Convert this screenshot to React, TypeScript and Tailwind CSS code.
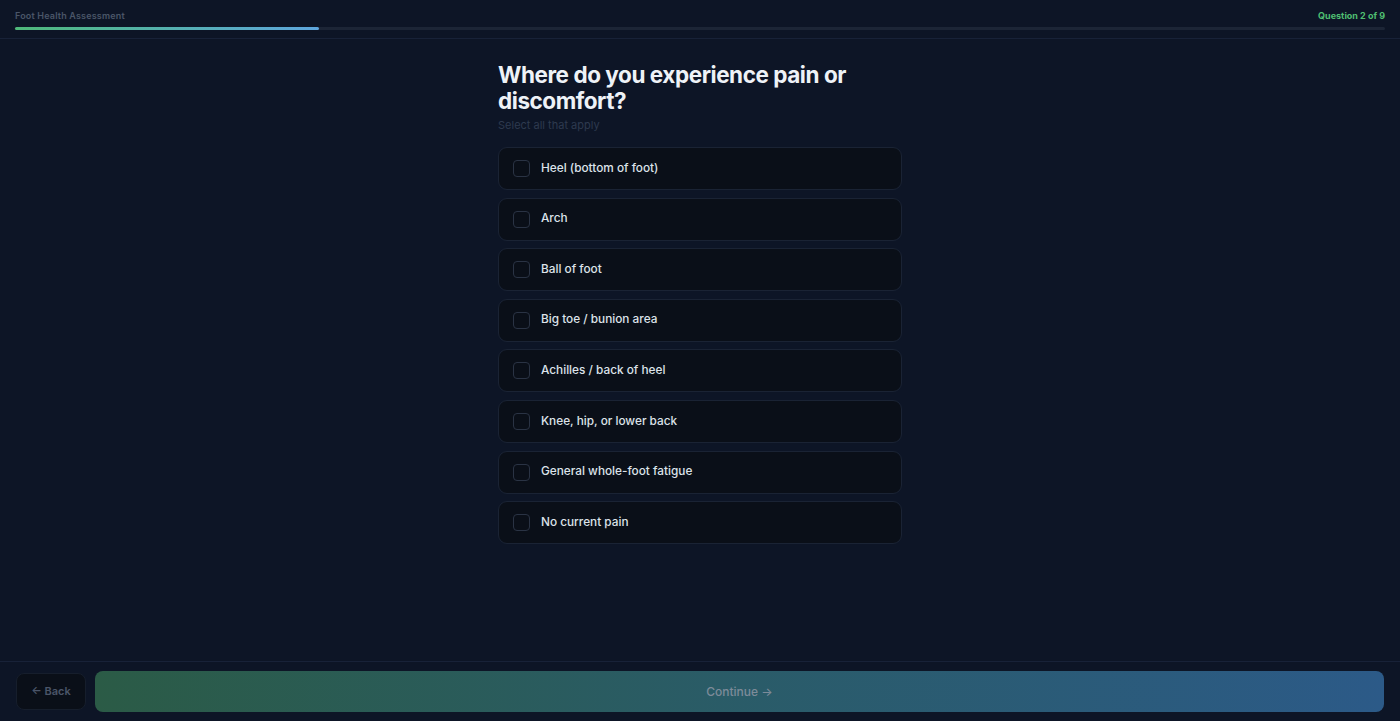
import React, { useState } from 'react';

const options = [
  'Heel (bottom of foot)',
  'Arch',
  'Ball of foot',
  'Big toe / bunion area',
  'Achilles / back of heel',
  'Knee, hip, or lower back',
  'General whole-foot fatigue',
  'No current pain',
];

const App: React.FC = () => {
  const [selected, setSelected] = useState<string[]>([]);
  const step = 2;
  const total = 9;

  const toggle = (opt: string) => {
    setSelected((prev) =>
      prev.includes(opt) ? prev.filter((o) => o !== opt) : [...prev, opt]
    );
  };

  return (
    <div
      className="flex h-[721px] w-full flex-col bg-[#0d1526] text-white"
      style={{ fontFamily: 'Inter, "Noto Sans", sans-serif' }}
    >
      {/* header */}
      <div className="border-b border-[#182238] px-[15px] pt-[10px] pb-[8px]">
        <div className="flex items-center justify-between leading-[11px]">
          <span className="text-[9px] font-semibold tracking-[0.02em] text-[#4a5568]">
            Foot Health Assessment
          </span>
          <span className="text-[9px] font-bold text-[#4fbf72]">
            Question {step} of {total}
          </span>
        </div>
        <div className="mt-[6px] h-[3px] w-full rounded-full bg-[#1c2536]">
          <div
            className="h-full rounded-full bg-gradient-to-r from-[#4fb879] to-[#5ea6de]"
            style={{ width: `${(step / total) * 100}%` }}
          />
        </div>
      </div>

      {/* body */}
      <div className="flex flex-1 justify-center">
        <div className="w-[404px] pt-[23px]">
          <h1 className="text-[22.5px] leading-[26px] font-bold tracking-[-0.02em] text-[#eef2f7]">
            Where do you experience pain or discomfort?
          </h1>
          <p className="mt-[3px] text-[11px] leading-[16px] text-[#2e3a4f]">Select all that apply</p>

          <div className="mt-[14px] flex flex-col gap-[7.6px]">
            {options.map((opt) => {
              const on = selected.includes(opt);
              return (
                <button
                  key={opt}
                  onClick={() => toggle(opt)}
                  className={`flex h-[43px] items-center gap-[11px] rounded-[9px] border px-[14px] text-left transition-colors ${
                    on ? 'border-[#3b7a5c] bg-[#0f1d1c]' : 'border-[#1a2334] bg-[#0a0f18]'
                  }`}
                >
                  <span
                    className={`flex h-[17px] w-[17px] items-center justify-center rounded-[4px] border ${
                      on ? 'border-[#4fb879] bg-[#4fb879]' : 'border-[#2a3344]'
                    }`}
                  >
                    {on && (
                      <svg viewBox="0 0 12 12" className="h-[10px] w-[10px]" fill="none">
                        <path d="M2.5 6.2l2.3 2.3 4.7-5" stroke="#0a0f18" strokeWidth="1.8" strokeLinecap="round" strokeLinejoin="round" />
                      </svg>
                    )}
                  </span>
                  <span className="text-[11.8px] font-medium text-[#dde3ea]">{opt}</span>
                </button>
              );
            })}
          </div>
        </div>
      </div>

      {/* footer */}
      <div className="flex items-center gap-[9px] border-t border-[#182238] px-[16px] pt-[9px] pb-[9px]">
        <button className="flex h-[37px] w-[70px] items-center justify-center rounded-[8px] border border-[#161e2c] bg-[#0a0f18] text-[11px] font-semibold text-[#4a5568]">
          ← Back
        </button>
        <button
          disabled={selected.length === 0}
          className="flex h-[41px] flex-1 items-center justify-center rounded-[8px] bg-gradient-to-r from-[#2b5b46] to-[#2c5a88] text-[12px] font-medium text-[#7d8b99]"
        >
          Continue →
        </button>
      </div>
    </div>
  );
};

export default App;
